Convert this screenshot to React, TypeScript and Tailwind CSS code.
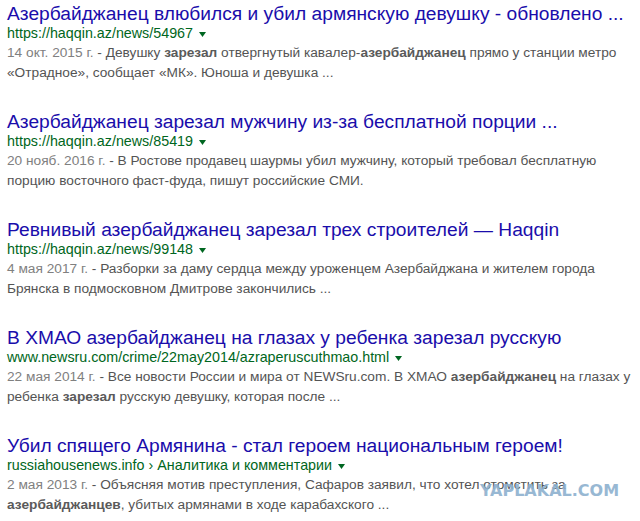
import React from "react";

type Part = string | { b: string };

interface Result {
  title: string;
  url: string;
  date: string;
  lines: Part[][];
}

const results: Result[] = [
  {
    title: "Азербайджанец влюбился и убил армянскую девушку - обновлено ...",
    url: "https://haqqin.az/news/54967",
    date: "14 окт. 2015 г.",
    lines: [
      [" - Девушку ", { b: "зарезал" }, " отвергнутый кавалер-", { b: "азербайджанец" }, " прямо у станции метро"],
      ["«Отрадное», сообщает «МК». Юноша и девушка ..."],
    ],
  },
  {
    title: "Азербайджанец зарезал мужчину из-за бесплатной порции ...",
    url: "https://haqqin.az/news/85419",
    date: "20 нояб. 2016 г.",
    lines: [
      [" - В Ростове продавец шаурмы убил мужчину, который требовал бесплатную"],
      ["порцию восточного фаст-фуда, пишут российские СМИ."],
    ],
  },
  {
    title: "Ревнивый азербайджанец зарезал трех строителей — Haqqin",
    url: "https://haqqin.az/news/99148",
    date: "4 мая 2017 г.",
    lines: [
      [" - Разборки за даму сердца между уроженцем Азербайджана и жителем города"],
      ["Брянска в подмосковном Дмитрове закончились ..."],
    ],
  },
  {
    title: "В ХМАО азербайджанец на глазах у ребенка зарезал русскую",
    url: "www.newsru.com/crime/22may2014/azraperuscuthmao.html",
    date: "22 мая 2014 г.",
    lines: [
      [" - Все новости России и мира от NEWSru.com. В ХМАО ", { b: "азербайджанец" }, " на глазах у"],
      ["ребенка ", { b: "зарезал" }, " русскую девушку, которая после ..."],
    ],
  },
  {
    title: "Убил спящего Армянина - стал героем национальным героем!",
    url: "russiahousenews.info › Аналитика и комментарии",
    date: "2 мая 2013 г.",
    lines: [
      [" - Объясняя мотив преступления, Сафаров заявил, что хотел отомстить за"],
      [{ b: "азербайджанцев" }, ", убитых армянами в ходе карабахского ..."],
    ],
  },
];

function renderParts(parts: Part[]) {
  return parts.map((p, i) =>
    typeof p === "string" ? (
      <span key={i}>{p}</span>
    ) : (
      <b key={i} className="font-bold text-[#5a5a5a]">
        {p.b}
      </b>
    )
  );
}

export default function App() {
  return (
    <div
      className="relative w-[640px] h-[521px] bg-white overflow-hidden"
      style={{ fontFamily: '"Liberation Sans", Arial, sans-serif' }}
    >
      <div className="flex flex-col gap-[29px] pl-[7px] pt-[4px]">
        {results.map((r, i) => (
          <div key={i} className="flex flex-col">
            <div className="text-[19.2px] leading-[20px] text-[#1a0dab] whitespace-nowrap">
              {r.title}
            </div>
            <div className="flex items-center text-[14.3px] leading-[19px] text-[#006621] whitespace-nowrap">
              <span>{r.url}</span>
              <svg width="7" height="5" viewBox="0 0 7 5" className="ml-[6px] mt-[1px]">
                <path d="M0 0 L7 0 L3.5 5 Z" fill="#006621" />
              </svg>
            </div>
            <div className="text-[13.7px] leading-[20px] text-[#545454] whitespace-nowrap">
              {r.lines.map((line, j) => (
                <div key={j}>
                  {j === 0 && <span className="text-[#808080]">{r.date}</span>}
                  {renderParts(line)}
                </div>
              ))}
            </div>
          </div>
        ))}
      </div>
      <div
        className="absolute left-[480px] top-[479px] text-[16px] font-bold text-[#8db1cf] opacity-90"
        style={{ fontFamily: '"DejaVu Sans", sans-serif' }}
      >
        YAPLAKAL.COM
      </div>
    </div>
  );
}
